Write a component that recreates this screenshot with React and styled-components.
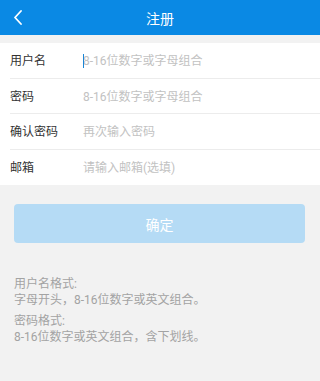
import React from "react";
import styled, { createGlobalStyle } from "styled-components";

const GlobalStyle = createGlobalStyle`
  html, body {
    margin: 0;
    padding: 0;
    background: #f2f2f2;
    font-family: Roboto, "Noto Sans CJK SC", sans-serif;
  }
  * {
    box-sizing: border-box;
  }
`;

const Page = styled.div`
  width: 320px;
  min-height: 381px;
  background: #f2f2f2;
`;

const Header = styled.header`
  height: 35px;
  background: #0a89e4;
  display: flex;
  align-items: center;
  justify-content: center;
  position: relative;
`;

const BackButton = styled.button`
  all: unset;
  position: absolute;
  left: 13px;
  top: 10px;
  width: 10px;
  height: 15px;
  cursor: pointer;
`;

const Title = styled.h1`
  margin: 0;
  font-size: 14px;
  font-weight: 400;
  color: #fff;
`;

const Form = styled.section`
  margin-top: 8px;
  background: #fff;
  padding-left: 10px;
`;

const Row = styled.label`
  height: 35.5px;
  padding-top: 2px;
  display: flex;
  align-items: center;
  border-bottom: ${(props) => (props.$last ? "none" : "1px solid #ececec")};
`;

const Label = styled.span`
  width: 73px;
  flex-shrink: 0;
  font-size: 12px;
  line-height: 16px;
  color: #333;
`;

const Field = styled.div`
  position: relative;
  flex: 1;
  display: flex;
  align-items: center;
`;

const Input = styled.input`
  all: unset;
  width: 100%;
  height: 16px;
  font-size: 12px;
  line-height: 16px;
  color: #333;
  font-family: inherit;
  &::placeholder {
    color: #c2c2c2;
  }
`;

const Caret = styled.span`
  position: absolute;
  left: 0;
  top: 50%;
  width: 1px;
  height: 14px;
  margin-top: -7px;
  background: #1a86d6;
`;

const Actions = styled.div`
  padding: 19px 15px 0 14px;
`;

const Submit = styled.button`
  all: unset;
  display: flex;
  align-items: center;
  justify-content: center;
  width: 100%;
  height: 39px;
  border-radius: 4px;
  background: #b5dbf5;
  color: #fff;
  font-size: 14px;
  cursor: pointer;
`;

const Notes = styled.div`
  padding: 33px 14px 0;
`;

const Note = styled.p`
  margin: 0 0 5px;
  font-size: 12px;
  line-height: 16px;
  color: #a3a3a3;
`;

const fields = [
  { label: "用户名", placeholder: "8-16位数字或字母组合", caret: true },
  { label: "密码", placeholder: "8-16位数字或字母组合", type: "password" },
  { label: "确认密码", placeholder: "再次输入密码", type: "password" },
  { label: "邮箱", placeholder: "请输入邮箱(选填)" },
];

export default function App() {
  return (
    <Page>
      <GlobalStyle />
      <Header>
        <BackButton aria-label="返回">
          <svg width="10" height="15" viewBox="0 0 10 15">
            <polyline
              points="8,1 2,7.5 8,14"
              fill="none"
              stroke="#fff"
              strokeWidth="1.8"
              strokeLinecap="round"
              strokeLinejoin="round"
            />
          </svg>
        </BackButton>
        <Title>注册</Title>
      </Header>
      <Form>
        {fields.map((f, i) => (
          <Row key={f.label} $last={i === fields.length - 1}>
            <Label>{f.label}</Label>
            <Field>
              <Input type={f.type || "text"} placeholder={f.placeholder} />
              {f.caret && <Caret />}
            </Field>
          </Row>
        ))}
      </Form>
      <Actions>
        <Submit>确定</Submit>
      </Actions>
      <Notes>
        <Note>
          用户名格式:
          <br />
          字母开头，8-16位数字或英文组合。
        </Note>
        <Note>
          密码格式:
          <br />
          8-16位数字或英文组合，含下划线。
        </Note>
      </Notes>
    </Page>
  );
}
